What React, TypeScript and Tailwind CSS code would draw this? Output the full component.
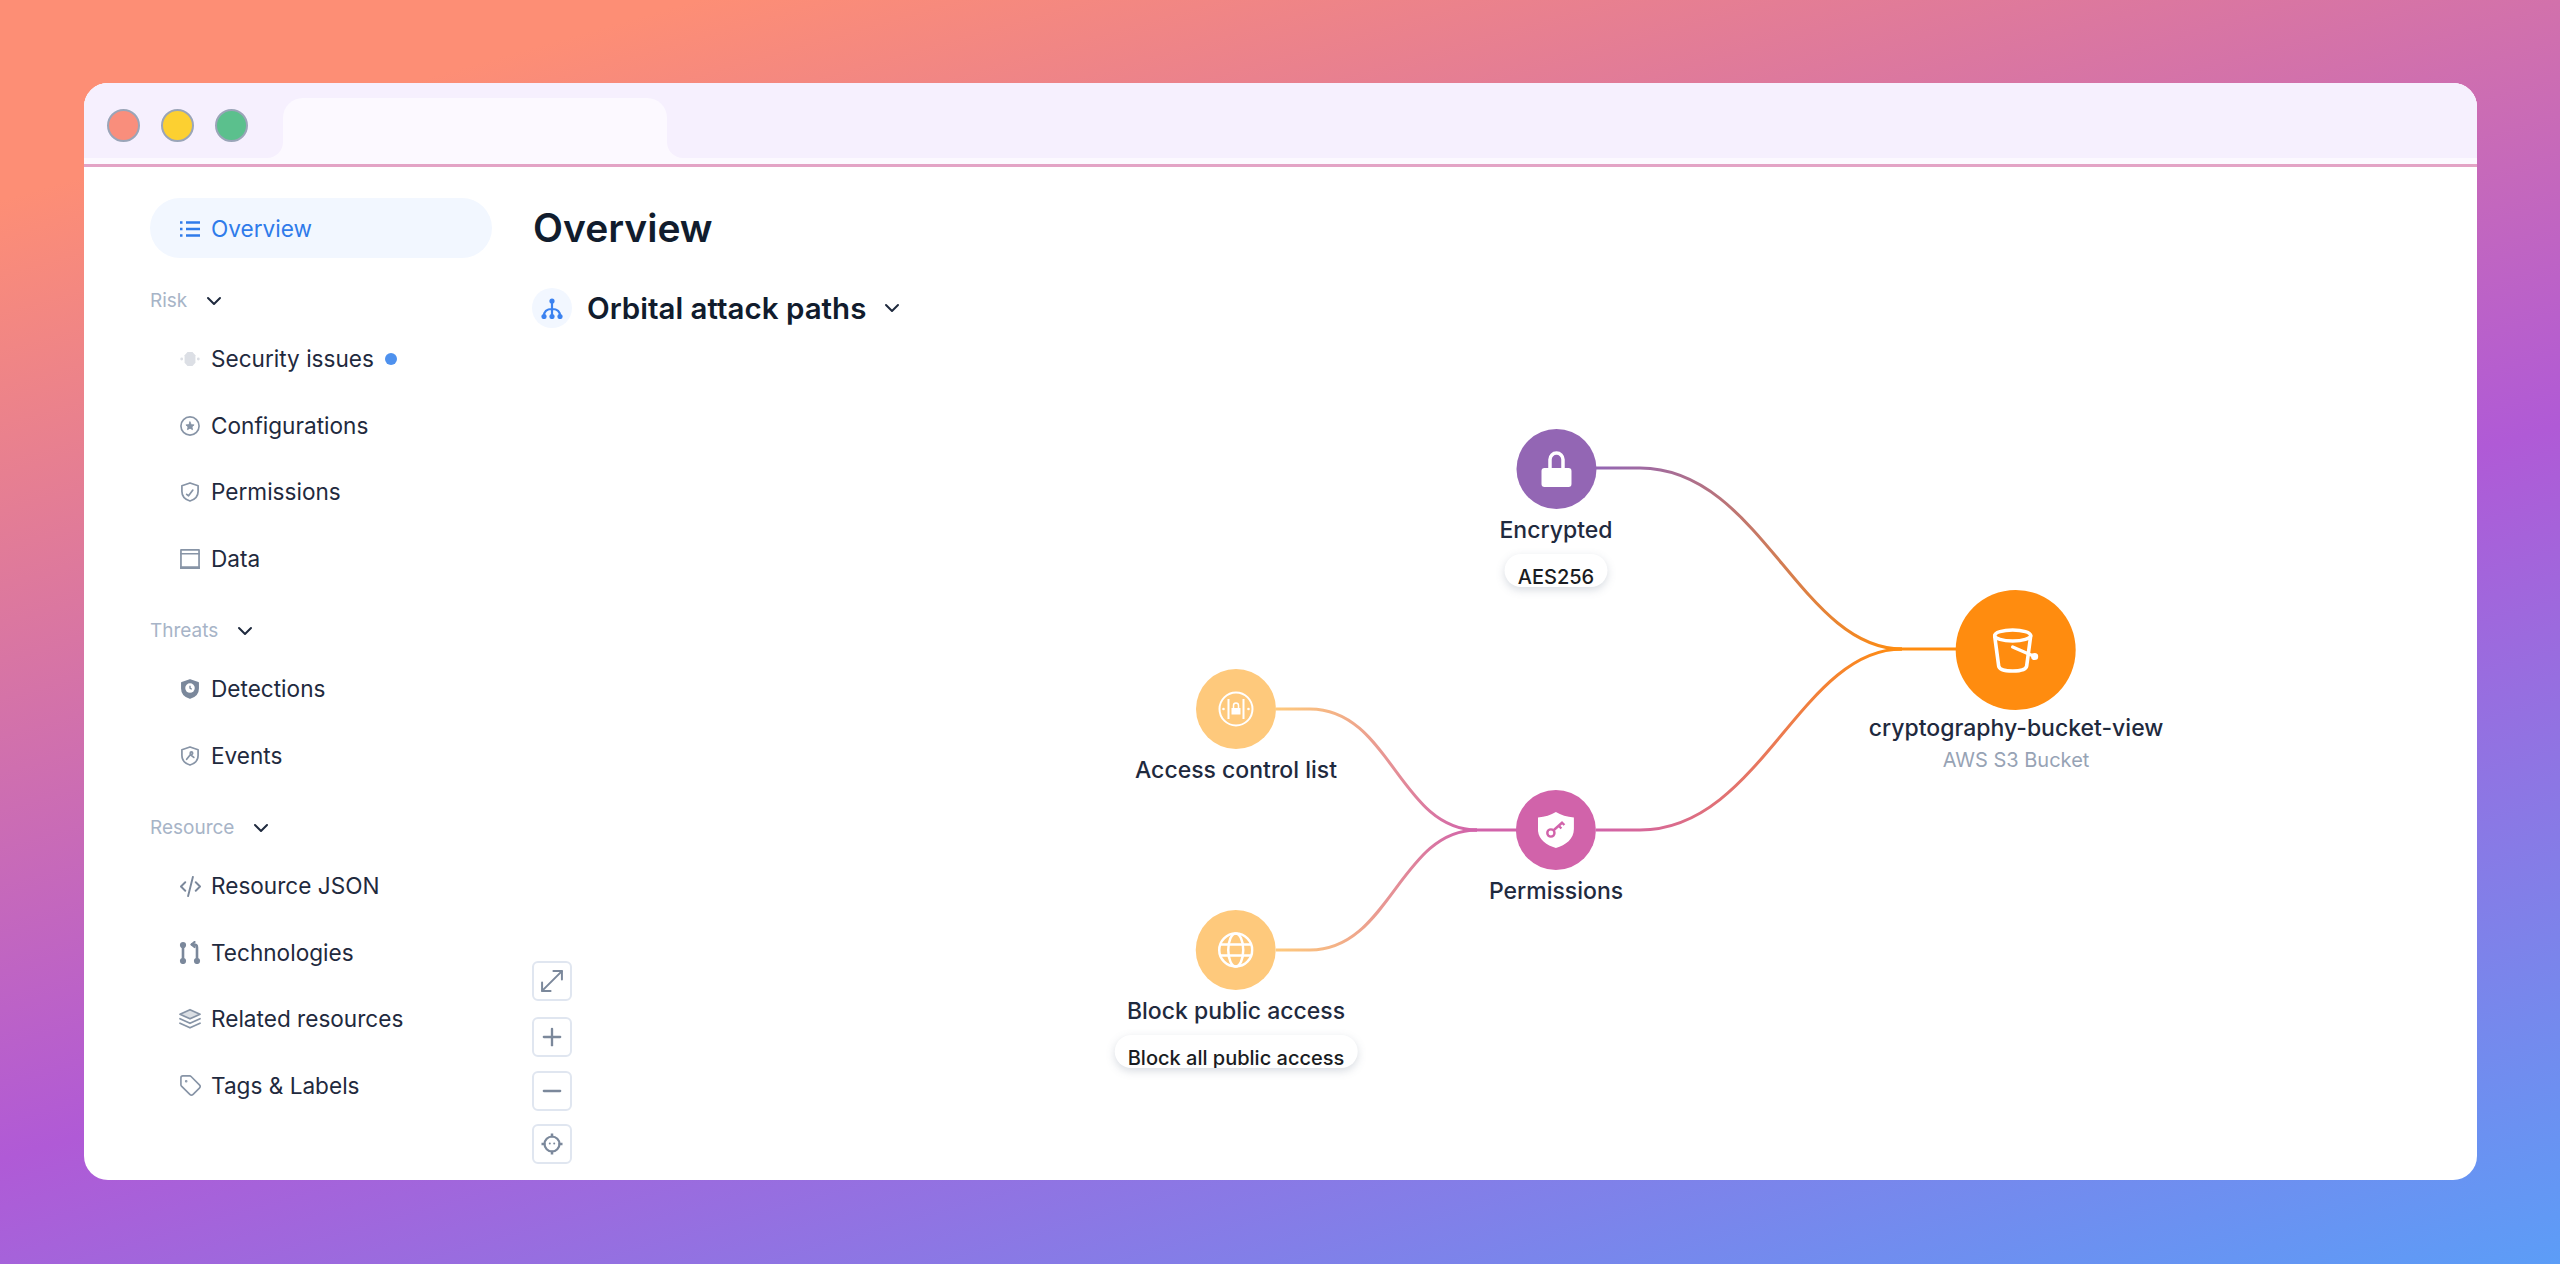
import React from 'react';
import { ChevronDown, Minus, MoveDiagonal, Plus, Tag } from 'lucide-react';

const Svg: React.FC<{ box?: string; className?: string; strokeWidth?: number; children: React.ReactNode }> = ({
  box = '0 0 24 24',
  className = 'w-[20px] h-[20px] text-[#8794a6]',
  strokeWidth = 1.8,
  children,
}) => (
  <svg
    viewBox={box}
    fill="none"
    stroke="currentColor"
    strokeWidth={strokeWidth}
    strokeLinecap="round"
    strokeLinejoin="round"
    className={className}
  >
    {children}
  </svg>
);

const shield = 'M12 2.500 20.500 5.500V11.500C20.500 16.500 17 20 12 21.500 7 20 3.500 16.500 3.500 11.500V5.500Z';

const ListIcon = () => (
  <svg viewBox="0 0 20 18" className="w-[20px] h-[18px] text-[#2f7bea]" fill="none" stroke="currentColor" strokeWidth={2.400}>
    <path d="M6 2.500h14M6 9h14M6 15.500h14" />
    <path d="M0 2.500h2.500M0 9h2.500M0 15.500h2.500" />
  </svg>
);

const SignalIcon = () => (
  <svg viewBox="0 0 24 24" className="w-[20px] h-[20px] text-[#dcdfe5]" fill="currentColor">
    <path d="M9 3.500h6l3.500 4v9l-3.500 4H9l-3.500-4v-9Z" />
    <circle cx="2" cy="12" r="1.700" />
    <circle cx="22" cy="12" r="1.700" />
  </svg>
);

const ConfigIcon = () => (
  <Svg box="1 1 22 22">
    <circle cx="12" cy="12" r="10" />
    <path fill="currentColor" strokeWidth={1} d="m12 7.500 1.300 3 3.200.300-2.400 2.100.700 3.100-2.800-1.600-2.800 1.600.700-3.100-2.400-2.100 3.200-.300Z" />
  </Svg>
);

const ShieldCheckIcon = () => (
  <Svg box="2.500 1.500 19 21">
    <path d={shield} />
    <path d="m8.500 14.500 2 1.500 4.500-6" />
  </Svg>
);

const ArchiveIcon = () => (
  <Svg box="1.500 1.500 21 21">
    <path d="M2.500 2.500h19v19h-19Z" />
    <path d="M2.500 6.500h19" />
    <path d="M2.500 21h19" strokeWidth={3} />
  </Svg>
);

const DetectionIcon = () => (
  <svg viewBox="2.500 1.500 19 21" className="w-[20px] h-[20px] text-[#7b889b]">
    <path fill="currentColor" d={shield} stroke="currentColor" strokeWidth={1.800} strokeLinejoin="round" />
    <circle cx="12" cy="11" r="5" fill="white" />
    <path d="M12 8.500v2.500l1.800 1.200" stroke="#7b889b" strokeWidth={1.400} fill="none" />
  </svg>
);

const EventIcon = () => (
  <Svg box="2.500 1.500 19 21">
    <path d={shield} />
    <circle cx="13.500" cy="9" r="1.300" />
    <path d="m12.500 10.500-4 5M13 11l3 2.500" />
  </Svg>
);

const CodeIcon = () => (
  <Svg box="1 1 22 22" className="w-[21px] h-[21px] text-[#7b889b]" strokeWidth={2}>
    <path d="M6.500 7.500 2 12l4.500 4.500M17.500 7.500 22 12l-4.500 4.500M14.500 2l-5 20" />
  </Svg>
);

const TechIcon = () => (
  <Svg box="1.500 0 21 23" className="w-[22px] h-[23px] text-[#7b889b]" strokeWidth={2.200}>
    <circle cx="5" cy="4" r="2" fill="currentColor" />
    <circle cx="5" cy="20" r="2" fill="currentColor" />
    <circle cx="19" cy="20" r="2" fill="currentColor" />
    <path d="M5 6v12M19 18V6.500C19 4.500 18 3.500 16 3.500h-2" strokeWidth={2.600} />
    <path d="m16.500 1-3 2.500 3 2.500" />
  </Svg>
);

const LayersIcon = () => (
  <Svg box="1 1 22 20.500" className="w-[22px] h-[22px] text-[#8794a6]" strokeWidth={1.800}>
    <path fill="currentColor" fillOpacity={0.3} d="m12 2 10 4.500-10 4.500L2 6.500Z" />
    <path d="m2 11 10 4.500L22 11" />
    <path d="m2 15.500 10 4.500 10-4.500" />
  </Svg>
);

const TreeIcon = () => (
  <svg viewBox="1 1 22 21" className="w-[24px] h-[21px] text-[#3b82f0]" fill="none" stroke="currentColor" strokeWidth={2.200}>
    <path d="M12 5v14M4 19c0-5 3-7 8-7s8 2 8 7" />
    <circle cx="12" cy="4" r="2.600" fill="currentColor" stroke="none" />
    <circle cx="12" cy="19.500" r="2.600" fill="currentColor" stroke="none" />
    <circle cx="4" cy="19.500" r="2.600" fill="currentColor" stroke="none" />
    <circle cx="20" cy="19.500" r="2.600" fill="currentColor" stroke="none" />
  </svg>
);

const TargetIcon = () => (
  <svg viewBox="0 0 24 24" className="w-[24px] h-[24px] text-[#7b889b]" fill="none" stroke="currentColor" strokeWidth={2.200}>
    <circle cx="12" cy="12" r="7.500" />
    <path d="M12 1.500v4M12 18.500v4M1.500 12h4M18.500 12h4" strokeWidth={2.500} />
    <circle cx="9.800" cy="11.500" r="1" fill="currentColor" stroke="none" />
    <circle cx="14.200" cy="11.500" r="1" fill="currentColor" stroke="none" />
  </svg>
);

const LockIcon = () => (
  <svg viewBox="0 0 32 36" className="w-[32px] h-[36px]" fill="none">
    <path d="M9.500 18V8.500a6.500 6.500 0 0 1 13 0V18" stroke="white" strokeWidth={3.500} />
    <rect x="1" y="17" width="30" height="19" rx="3" fill="white" />
  </svg>
);

const AclIcon = () => (
  <svg viewBox="0 0 36 36" className="w-[36px] h-[36px]" fill="none" stroke="white" strokeWidth={2}>
    <circle cx="18" cy="18" r="16.500" />
    <path d="M10.500 8v20M25.500 8v20" />
    <circle cx="5.500" cy="18" r="1.300" fill="white" stroke="none" />
    <circle cx="30.500" cy="18" r="1.300" fill="white" stroke="none" />
    <path d="M15.500 17v-2.500a2.500 2.500 0 0 1 5 0V17" strokeWidth={1.500} />
    <rect x="13.500" y="17" width="9" height="6.500" fill="white" stroke="none" />
  </svg>
);

const GlobeIcon = () => (
  <svg viewBox="0 0 36 36" className="w-[36px] h-[36px]" fill="none" stroke="white" strokeWidth={2.500}>
    <circle cx="18" cy="18" r="16.500" />
    <ellipse cx="18" cy="18" rx="7.500" ry="16.500" />
    <path d="M3 12.500h30M3 23.500h30" />
  </svg>
);

const KeyShieldIcon = () => (
  <svg viewBox="0 0 36 36" className="w-[36px] h-[36px]">
    <path fill="white" d="M18 0C23 3 29 5 36 5.500V17C36 27 28 33 18 36 8 33 0 27 0 17V5.500C7 5 13 3 18 0Z" />
    <circle cx="13" cy="21" r="3.600" fill="none" stroke="#d163aa" strokeWidth={2.400} />
    <path d="m16 18 9-8M21 14l2.500 2.500M24.500 11l2 2" fill="none" stroke="#d163aa" strokeWidth={2.400} />
  </svg>
);

const BucketIcon = () => (
  <svg viewBox="0 0 46 45" className="w-[46px] h-[45px]" fill="none" stroke="white" strokeWidth={3.600} strokeLinecap="round" strokeLinejoin="round">
    <ellipse cx="20" cy="7.500" rx="18" ry="5.500" />
    <path d="M2 8 6 38c.5 3.500 7 5 14 5s13.500-1.500 14-5l4-30" />
    <path d="m20 19 22 9.500" strokeWidth={3.200} />
    <circle cx="42" cy="28.500" r="1.800" fill="white" />
  </svg>
);

const NavItem: React.FC<{ icon: React.ReactNode; label: string; dot?: boolean }> = ({ icon, label, dot }) => (
  <div className="h-[66.5px] flex items-center pl-[28px]">
    <span className="w-[24px] flex justify-center shrink-0">{icon}</span>
    <span className="ml-[9px] text-[22.6px] text-[#1f2a3e]">{label}</span>
    {dot && <span className="ml-[11px] w-[12px] h-[12px] rounded-full bg-[#4e91ee]" />}
  </div>
);

const SectionLabel: React.FC<{ label: string; className: string }> = ({ label, className }) => (
  <div className={`h-[44px] pt-[2px] flex items-center text-[19px] text-[#a7b4c7] ${className}`}>
    {label}
    <ChevronDown className="ml-[15px] w-[24px] h-[24px] text-[#1f2a3e]" />
  </div>
);

const Pill: React.FC<{ label: string }> = ({ label }) => (
  <div className="mt-[9px] h-[33px] px-[13px] pt-[13px] rounded-[18px] bg-white shadow-[0_3px_8px_rgba(100,116,139,0.25)] overflow-hidden text-[20px] leading-[20px] font-medium text-[#1a1c22] whitespace-nowrap">
    {label}
  </div>
);

const Edges = () => (
  <svg width="1900" height="800" className="absolute left-0 top-0" fill="none" strokeWidth={3}>
    <defs>
      <linearGradient id="enc" gradientUnits="userSpaceOnUse" x1="1596" y1="468" x2="1902" y2="649">
        <stop offset="0" stopColor="#9366b4" />
        <stop offset="1" stopColor="#ff8c0f" />
      </linearGradient>
      <linearGradient id="perm" gradientUnits="userSpaceOnUse" x1="1596" y1="830" x2="1902" y2="649">
        <stop offset="0" stopColor="#d163aa" />
        <stop offset="1" stopColor="#ff8c0f" />
      </linearGradient>
      <linearGradient id="acl" gradientUnits="userSpaceOnUse" x1="1276" y1="709" x2="1477" y2="830">
        <stop offset="0" stopColor="#fec97c" />
        <stop offset="1" stopColor="#d163aa" />
      </linearGradient>
      <linearGradient id="blk" gradientUnits="userSpaceOnUse" x1="1276" y1="950" x2="1477" y2="830">
        <stop offset="0" stopColor="#fec97c" />
        <stop offset="1" stopColor="#d163aa" />
      </linearGradient>
    </defs>
    <g transform="translate(-532 -328)">
      <path stroke="url(#enc)" d="M1596 468H1640C1760 468 1800 649 1902 649" />
      <path stroke="url(#perm)" d="M1596 830H1640C1760 830 1800 649 1902 649" />
      <path stroke="#ff8c0f" d="M1895 649H1956" />
      <path stroke="url(#acl)" d="M1276 709H1310C1390 709 1400 830 1477 830" />
      <path stroke="url(#blk)" d="M1276 950H1310C1390 950 1400 830 1477 830" />
      <path stroke="#d163aa" d="M1470 830H1516" />
    </g>
  </svg>
);

const App: React.FC = () => {
  return (
    <div className="h-screen bg-[linear-gradient(164deg,#fd8e75_10%,#b05ad6_58%,#5c9df7_100%)] pl-[84px] pr-[83px] pt-[83px] pb-[84px] font-[Inter,sans-serif]">
      <div className="h-full bg-white rounded-[24px] overflow-hidden flex flex-col">
        <div className="bg-[#fcf9ff] pb-[6px] border-b-[3px] border-[#e3a3c5] flex shrink-0 h-[84px]">
          <div className="w-[199px] h-full bg-[#f6f0fe] rounded-br-[16px] flex items-center pl-[23px] pt-[9px] gap-[21px]">
            <span className="w-[33px] h-[33px] rounded-full bg-[#f98e7c] border-2 border-[#9aa5b8]" />
            <span className="w-[33px] h-[33px] rounded-full bg-[#fcd031] border-2 border-[#9aa5b8]" />
            <span className="w-[33px] h-[33px] rounded-full bg-[#5bc08d] border-2 border-[#9aa5b8]" />
          </div>
          <div className="w-[384px] h-full bg-[#f6f0fe]">
            <div className="mt-[15px] h-[60px] bg-[#fcf9ff] rounded-t-[20px]" />
          </div>
          <div className="flex-1 h-full bg-[#f6f0fe] rounded-bl-[16px]" />
        </div>

        <div className="flex-1 flex min-h-0">
          <aside className="w-[408px] pl-[66px] pt-[31px] shrink-0">
            <div className="h-[60px] pt-[1px] rounded-full bg-[#f2f7ff] flex items-center pl-[30px] text-[#2f7bea] text-[22.6px]">
              <ListIcon />
              <span className="ml-[11px]">Overview</span>
            </div>

            <SectionLabel label="Risk" className="mt-[20px]" />
            <div className="mt-[4px]">
              <NavItem icon={<SignalIcon />} label="Security issues" dot />
              <NavItem icon={<ConfigIcon />} label="Configurations" />
              <NavItem icon={<ShieldCheckIcon />} label="Permissions" />
              <NavItem icon={<ArchiveIcon />} label="Data" />
            </div>

            <SectionLabel label="Threats" className="mt-[16px]" />
            <div className="mt-[4px]">
              <NavItem icon={<DetectionIcon />} label="Detections" />
              <NavItem icon={<EventIcon />} label="Events" />
            </div>

            <SectionLabel label="Resource" className="mt-[16px]" />
            <div className="mt-[4px]">
              <NavItem icon={<CodeIcon />} label="Resource JSON" />
              <NavItem icon={<TechIcon />} label="Technologies" />
              <NavItem icon={<LayersIcon />} label="Related resources" />
              <NavItem icon={<Tag strokeWidth={1.700} className="w-[23px] h-[23px] text-[#8794a6]" />} label="Tags & Labels" />
            </div>
          </aside>

          <main className="flex-1 ml-[40px] pt-[31px] flex flex-col min-w-0">
            <h1 className="h-[60px] flex items-center pl-[1px] text-[39px] font-semibold text-[#111c2d]">Overview</h1>
            <div className="mt-[30px] h-[40px] flex items-center">
              <span className="w-[40px] h-[40px] rounded-full bg-[#f2f7ff] flex items-center justify-center">
                <TreeIcon />
              </span>
              <h2 className="ml-[15px] text-[29.5px] font-semibold text-[#111c2d]">Orbital attack paths</h2>
              <ChevronDown className="ml-[14px] w-[24px] h-[24px] text-[#1f2a3e]" />
            </div>

            <div className="relative flex-1">
              <Edges />

              <div className="absolute left-[1024px] top-[101px] -translate-x-1/2 flex flex-col items-center">
                <div className="w-[80px] h-[80px] rounded-full bg-[#9366b4] flex items-center justify-center">
                  <LockIcon />
                </div>
                <div className="mt-[6px] text-[23px] leading-[30px] font-medium text-[#1f2a3e] whitespace-nowrap">Encrypted</div>
                <Pill label="AES256" />
              </div>

              <div className="absolute left-[704px] top-[341px] -translate-x-1/2 flex flex-col items-center">
                <div className="w-[80px] h-[80px] rounded-full bg-[#fec97c] flex items-center justify-center">
                  <AclIcon />
                </div>
                <div className="mt-[6px] text-[23px] leading-[30px] font-medium text-[#1f2a3e] whitespace-nowrap">Access control list</div>
              </div>

              <div className="absolute left-[1024px] top-[462px] -translate-x-1/2 flex flex-col items-center">
                <div className="w-[80px] h-[80px] rounded-full bg-[#d163aa] flex items-center justify-center">
                  <KeyShieldIcon />
                </div>
                <div className="mt-[6px] text-[23px] leading-[30px] font-medium text-[#1f2a3e] whitespace-nowrap">Permissions</div>
              </div>

              <div className="absolute left-[704px] top-[582px] -translate-x-1/2 flex flex-col items-center">
                <div className="w-[80px] h-[80px] rounded-full bg-[#fec97c] flex items-center justify-center">
                  <GlobeIcon />
                </div>
                <div className="mt-[6px] text-[23px] leading-[30px] font-medium text-[#1f2a3e] whitespace-nowrap">Block public access</div>
                <Pill label="Block all public access" />
              </div>

              <div className="absolute left-[1484px] top-[262px] -translate-x-1/2 flex flex-col items-center">
                <div className="w-[120px] h-[120px] rounded-full bg-[#ff8c0f] flex items-center justify-center">
                  <BucketIcon />
                </div>
                <div className="mt-[3px] text-[23px] leading-[30px] font-medium text-[#1f2a3e] whitespace-nowrap">cryptography-bucket-view</div>
                <div className="mt-[5px] text-[20px] leading-[24px] text-[#97a3b5] whitespace-nowrap">AWS S3 Bucket</div>
              </div>

              <div className="absolute left-0 top-[633px] flex flex-col">
                <button className="w-[40px] h-[40px] rounded-[6px] border-2 border-[#e0e6f0] flex items-center justify-center text-[#7b889b]">
                  <MoveDiagonal strokeWidth={1.400} className="w-[34px] h-[34px] shrink-0" />
                </button>
                <button className="mt-[16px] w-[40px] h-[40px] rounded-[6px] border-2 border-[#e0e6f0] flex items-center justify-center text-[#7b889b]">
                  <Plus className="w-[28px] h-[28px] shrink-0" />
                </button>
                <button className="mt-[14px] w-[40px] h-[40px] rounded-[6px] border-2 border-[#e0e6f0] flex items-center justify-center text-[#7b889b]">
                  <Minus className="w-[28px] h-[28px] shrink-0" />
                </button>
                <button className="mt-[13px] w-[40px] h-[40px] rounded-[6px] border-2 border-[#e0e6f0] flex items-center justify-center text-[#7b889b]">
                  <TargetIcon />
                </button>
              </div>
            </div>
          </main>
        </div>
      </div>
    </div>
  );
};

export default App;
